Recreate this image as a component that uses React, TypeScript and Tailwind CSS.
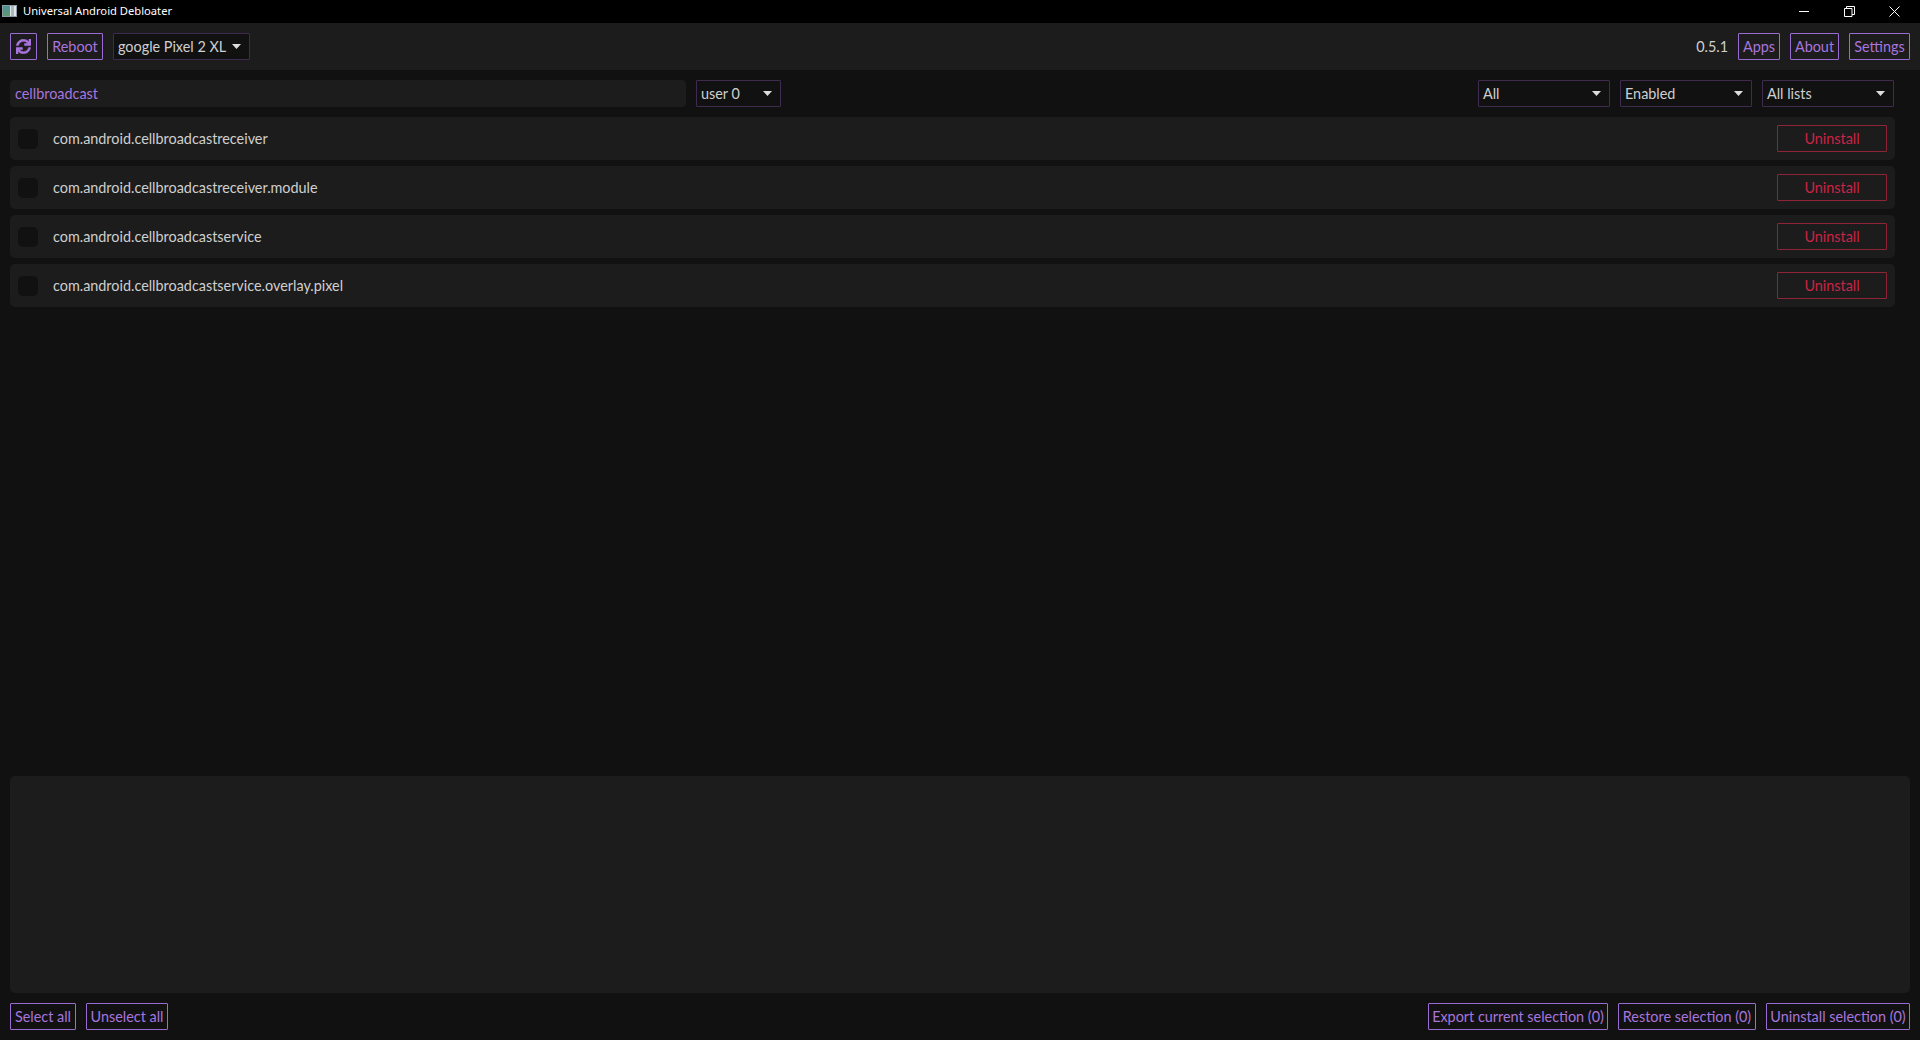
import { FaSync } from "react-icons/fa";

const packages = [
  "com.android.cellbroadcastreceiver",
  "com.android.cellbroadcastreceiver.module",
  "com.android.cellbroadcastservice",
  "com.android.cellbroadcastservice.overlay.pixel",
];

function OutlineButton({ label, width }: { label: string; width: string }) {
  return (
    <button
      className={`flex h-[27px] items-center justify-center whitespace-nowrap rounded-[1px] border border-[#9a6bd0] text-[#a875de] ${width}`}
    >
      {label}
    </button>
  );
}

function Picker({ label, width }: { label: string; width: string }) {
  return (
    <div
      className={`flex h-[27px] items-center justify-between rounded-[1px] border border-[#3f2b4f] bg-[#111111] pl-[4px] pr-[8px] text-[#cfcfcf] ${width}`}
    >
      <span>{label}</span>
      <svg width="9" height="5" viewBox="0 0 9 5">
        <path d="M0 0h9L4.5 5z" fill="#dddddd" />
      </svg>
    </div>
  );
}

function WindowButtons() {
  return (
    <div className="flex items-center gap-[34px] pr-[20px]">
      <svg width="11" height="11" viewBox="0 0 11 11">
        <path d="M0 5.5h10" stroke="#fff" fill="none" />
      </svg>
      <svg width="11" height="11" viewBox="0 0 11 11">
        <path
          d="M.5 2.5h7.5v8H.5zM2.5 2.5V.5h8v8H8"
          stroke="#fff"
          fill="none"
        />
      </svg>
      <svg width="11" height="11" viewBox="0 0 11 11">
        <path d="M.5.5l10 10M10.5.5l-10 10" stroke="#fff" fill="none" />
      </svg>
    </div>
  );
}

export default function App() {
  return (
    <div className="flex h-[1040px] w-[1920px] flex-col overflow-hidden bg-[#111111] font-['Lato',sans-serif] text-[14.4px]">
      <header className="flex h-[23px] items-center justify-between bg-black">
        <div className="flex items-center">
          <div className="ml-[2px] flex h-[12px] w-[15px] overflow-hidden border border-[#8a9aa6] bg-[#dfe6e8]">
            <div className="h-full w-[7px] bg-gradient-to-b from-[#4f8f9a] to-[#5f9a6c]" />
            <div className="ml-[1px] h-full w-[3px] bg-[#aab8bc]" />
          </div>
          <span className="ml-[6px] font-['Noto_Sans',sans-serif] text-[11.2px] text-white">
            Universal Android Debloater
          </span>
        </div>
        <WindowButtons />
      </header>

      <nav className="flex h-[47px] items-center justify-between bg-[#1c1c1c] px-[10px]">
        <div className="flex items-center gap-[10px]">
          <button className="flex h-[27px] w-[27px] items-center justify-center rounded-[1px] border border-[#9a6bd0] text-[#a875de]">
            <FaSync size={15} stroke="currentColor" strokeWidth={18} />
          </button>
          <OutlineButton label="Reboot" width="w-[56px]" />
          <Picker label="google Pixel 2 XL" width="w-[137px]" />
        </div>
        <div className="flex items-center gap-[10px]">
          <span className="text-[#cfcfcf]">0.5.1</span>
          <OutlineButton label="Apps" width="w-[42px]" />
          <OutlineButton label="About" width="w-[49px]" />
          <OutlineButton label="Settings" width="w-[61px]" />
        </div>
      </nav>

      <main className="flex flex-1 flex-col px-[10px] pt-[10px]">
        <div className="flex items-center pr-[16px]">
          <div className="flex h-[27px] w-[676px] items-center rounded-[4px] bg-[#1c1c1c] px-[5px] text-[#a875de]">
            cellbroadcast
          </div>
          <div className="ml-[10px]">
            <Picker label="user 0" width="w-[85px]" />
          </div>
          <div className="ml-auto flex gap-[10px]">
            <Picker label="All" width="w-[132px]" />
            <Picker label="Enabled" width="w-[132px]" />
            <Picker label="All lists" width="w-[132px]" />
          </div>
        </div>

        <ul className="mt-[10px] flex h-[659px] flex-col gap-[6px] pr-[15px]">
          {packages.map((name) => (
            <li
              key={name}
              className="flex h-[43px] items-center rounded-[5px] bg-[#1c1c1c] pl-[8px] pr-[8px]"
            >
              <div className="h-[20px] w-[20px] rounded-[5px] bg-[#111111]" />
              <span className="ml-[15px] text-[#cfcfcf]">{name}</span>
              <button className="ml-auto flex h-[27px] w-[110px] items-center justify-center rounded-[1px] border border-[#8f2338] text-[#c92445]">
                Uninstall
              </button>
            </li>
          ))}
        </ul>

        <section className="h-[217px] rounded-[5px] bg-[#1c1c1c]" />

        <footer className="mt-[10px] flex items-center justify-between">
          <div className="flex gap-[10px]">
            <OutlineButton label="Select all" width="w-[66px]" />
            <OutlineButton label="Unselect all" width="w-[82px]" />
          </div>
          <div className="flex gap-[10px]">
            <OutlineButton label="Export current selection (0)" width="w-[180px]" />
            <OutlineButton label="Restore selection (0)" width="w-[138px]" />
            <OutlineButton label="Uninstall selection (0)" width="w-[144px]" />
          </div>
        </footer>
      </main>
    </div>
  );
}
